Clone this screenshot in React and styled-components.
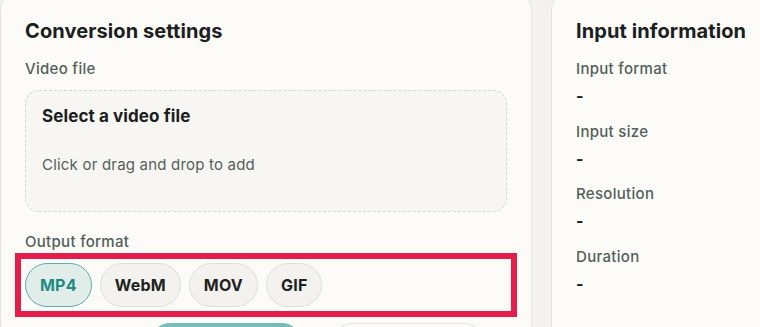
import styled, { createGlobalStyle } from "styled-components";

const GlobalStyle = createGlobalStyle`
  body {
    margin: 0;
    background: #f3f2ee;
    font-family: Inter, "Noto Sans CJK JP", sans-serif;
    color: #1b201e;
    overflow: hidden;
  }
`;

const Layout = styled.div`
  display: grid;
  grid-template-columns: 532px 420px;
  gap: 19px;
  margin-top: -8px;
  width: 971px;
`;

const Card = styled.section`
  background: #fcfbf7;
  border: 1px solid #e3e2dc;
  border-radius: 18px;
  padding: 24px;
  box-sizing: border-box;
  height: 360px;
`;

const Title = styled.h2`
  margin: 0 0 14px;
  font-size: 20px;
  font-weight: 700;
  line-height: 28px;
  letter-spacing: 0.1px;
`;

const Label = styled.div`
  font-size: 15px;
  font-weight: 500;
  color: #52605a;
  line-height: 20px;
  letter-spacing: 0.3px;
  margin-bottom: ${(p) => p.$mb || 0}px;
`;

const DropZone = styled.div`
  border: 1px dashed #d9d8d2;
  border-radius: 14px;
  background: #f7f6f2;
  height: 122px;
  box-sizing: border-box;
  padding: 14px 16px 36px;
  display: flex;
  flex-direction: column;
  justify-content: space-between;
  margin-bottom: 20px;
`;

const DropTitle = styled.div`
  font-size: 17px;
  font-weight: 700;
  line-height: 22px;
  letter-spacing: 0.1px;
`;

const DropHint = styled.div`
  font-size: 15px;
  color: #55605b;
  line-height: 20px;
  letter-spacing: 0.2px;
`;

const ChipRow = styled.div`
  display: flex;
  gap: 8px;
  outline: 6px solid #e41d4c;
  outline-offset: 4px;
  margin-bottom: 16px;
`;

const Chip = styled.button`
  height: 44px;
  padding: 0 14px;
  border-radius: 22px;
  font-family: inherit;
  font-size: 16px;
  font-weight: 700;
  letter-spacing: 0.2px;
  border: 1px solid ${(p) => (p.$active ? "#5bb0a9" : "#e0dfd9")};
  background: ${(p) => (p.$active ? "#e1ede8" : "#f3f2ee")};
  color: ${(p) => (p.$active ? "#1f8a84" : "#1d2320")};
`;

const ActionRow = styled.div`
  display: flex;
  gap: 30px;
  padding-left: 125px;
`;

const Action = styled.div`
  width: 150px;
  height: 40px;
  border-radius: 20px;
  background: ${(p) => (p.$primary ? "#76bdb8" : "#fcfbf7")};
  border: 1px solid ${(p) => (p.$primary ? "#76bdb8" : "#e3e2dc")};
`;

const InfoItem = styled.div`
  margin-bottom: 14.5px;
`;

const InfoValue = styled.div`
  font-size: 16px;
  font-weight: 700;
  line-height: 22px;
  margin-top: 6px;
`;

const formats = ["MP4", "WebM", "MOV", "GIF"];
const info = ["Input format", "Input size", "Resolution", "Duration"];

export default function App() {
  return (
    <>
      <GlobalStyle />
      <Layout>
        <Card>
          <Title>Conversion settings</Title>
          <Label $mb={11}>Video file</Label>
          <DropZone>
            <DropTitle>Select a video file</DropTitle>
            <DropHint>Click or drag and drop to add</DropHint>
          </DropZone>
          <Label $mb={11}>Output format</Label>
          <ChipRow>
            {formats.map((f, i) => (
              <Chip key={f} $active={i === 0}>
                {f}
              </Chip>
            ))}
          </ChipRow>
          <ActionRow>
            <Action $primary />
            <Action />
          </ActionRow>
        </Card>
        <Card>
          <Title>Input information</Title>
          {info.map((label) => (
            <InfoItem key={label}>
              <Label>{label}</Label>
              <InfoValue>-</InfoValue>
            </InfoItem>
          ))}
        </Card>
      </Layout>
    </>
  );
}
